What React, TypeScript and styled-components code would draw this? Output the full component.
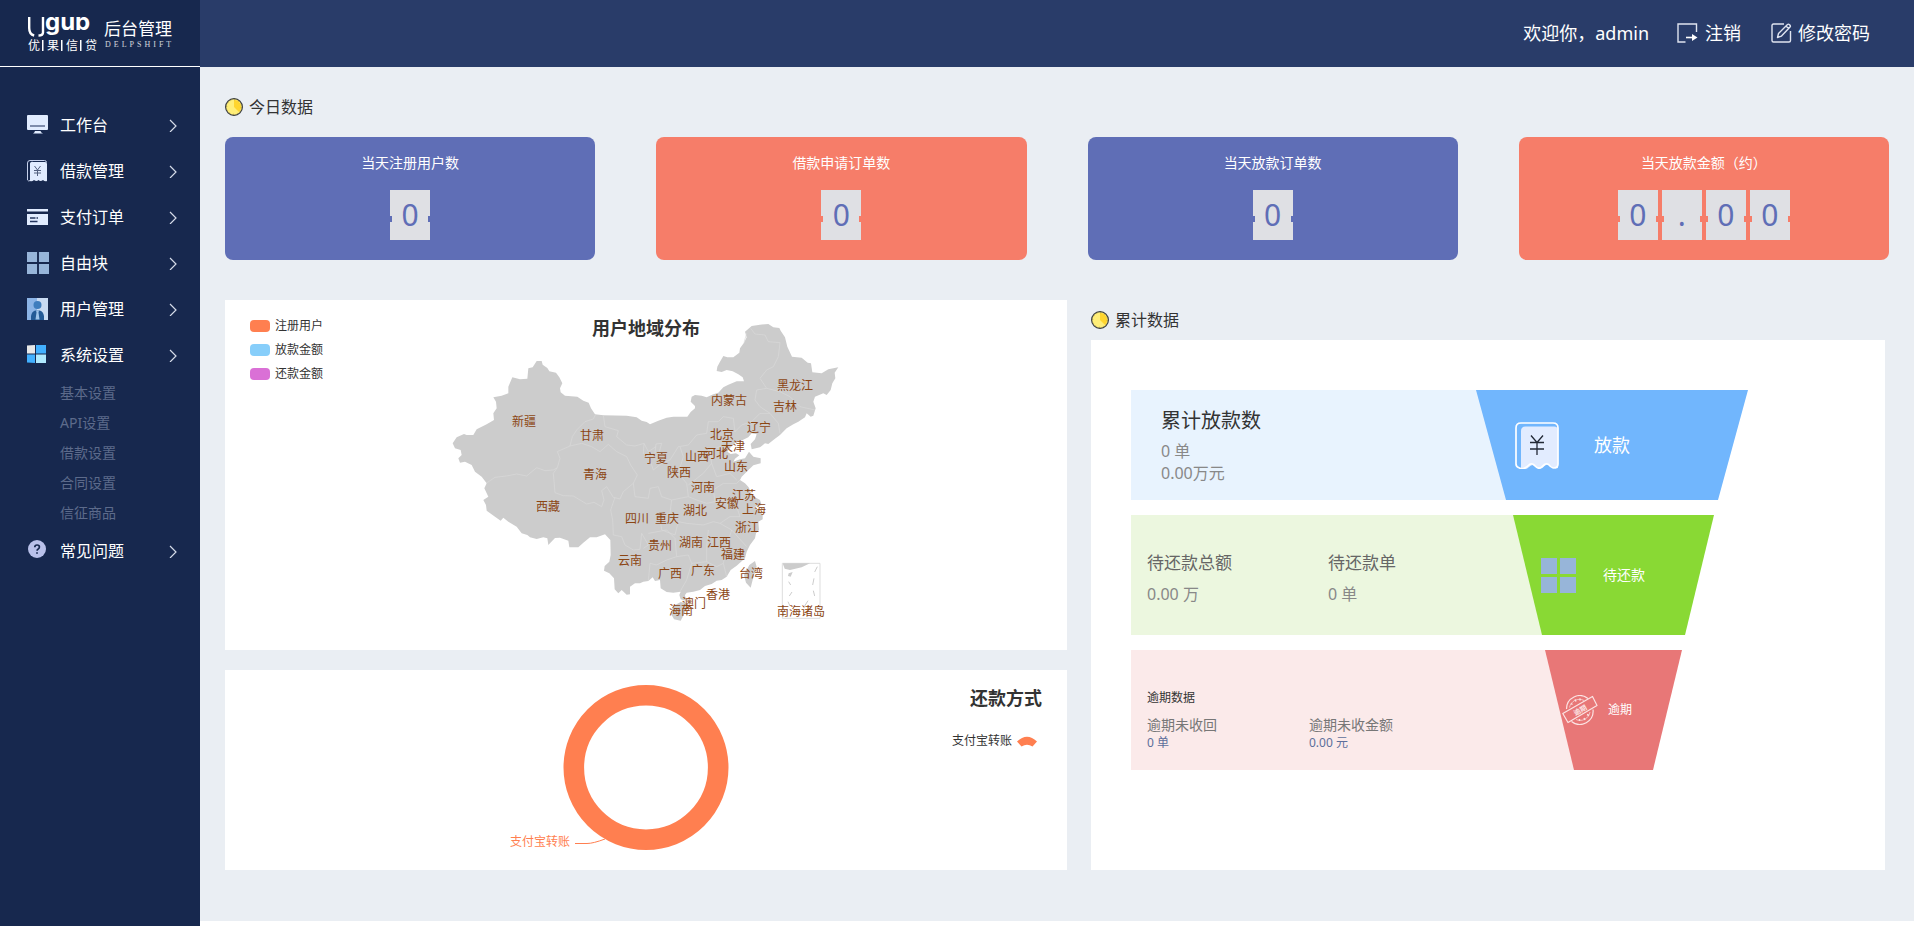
import React from "react";
import styled, { createGlobalStyle } from "styled-components";

const GlobalStyle = createGlobalStyle`
  *, *::before, *::after { box-sizing: border-box; }
  body {
    margin: 0;
    background: #fff;
    color: #333;
    font-family: "Noto Sans", "Noto Sans CJK SC", sans-serif;
    font-size: 14px;
    line-height: 20px;
  }
  h1, h2, h3, p, ul, dl, dd { margin: 0; padding: 0; font-weight: 400; }
  ul { list-style: none; }
  svg { display: block; flex: none; }
`;

/* ---------- shell ---------- */

const Shell = styled.div`
  display: flex;
  min-height: 100vh;
`;

const Sidebar = styled.aside`
  flex: 0 0 200px;
  background: #17284e;
`;

const Brand = styled.a`
  display: block;
  height: 67px;
  padding: 17px 0 0 28px;
  border-bottom: 1px solid #fff;
`;

const Nav = styled.nav`
  padding-top: 35px;
`;

const NavItem = styled.button`
  display: flex;
  align-items: center;
  width: 100%;
  height: 46px;
  padding: 0 23px 0 27px;
  border: 0;
  background: none;
  color: #fff;
  font: inherit;
  font-size: 16px;
  line-height: 24px;
  text-align: left;
  cursor: pointer;
`;

const NavIcon = styled.span`
  flex: 0 0 33px;
`;

const NavLabel = styled.span`
  flex: 1;
`;

const SubLink = styled.a`
  display: block;
  padding-left: 60px;
  color: #5d6b8b;
  font-size: 14px;
  line-height: 30px;
  text-decoration: none;
`;

const Column = styled.div`
  flex: 1;
  min-width: 0;
  display: flex;
  flex-direction: column;
`;

const TopBar = styled.header`
  display: flex;
  align-items: center;
  justify-content: flex-end;
  gap: 28px;
  height: 67px;
  padding: 0 44px 1px 0;
  background: #293c69;
  color: #fff;
  font-size: 18px;
  line-height: 24px;
`;

const TopLink = styled.a<{ $gap: number }>`
  display: flex;
  align-items: center;
  gap: ${(p) => p.$gap}px;
  color: inherit;
  text-decoration: none;
  & + & { margin-left: 2px; }
`;

const Main = styled.main`
  flex: 1;
  margin-bottom: 5px;
  padding: 25px;
  background: #eaeef3;
`;

/* ---------- today cards ---------- */

const SectionTitle = styled.h2<{ $height: number }>`
  display: flex;
  align-items: center;
  gap: 6px;
  height: ${(p) => p.$height}px;
  font-size: 16px;
`;

const StatGrid = styled.div`
  display: grid;
  grid-template-columns: repeat(4, 1fr);
  gap: 61px;
  margin: 15px 0 40px;
`;

const StatCard = styled.section<{ $color: string }>`
  display: flex;
  flex-direction: column;
  align-items: center;
  gap: 17px;
  padding: 16px 0 20px;
  border-radius: 8px;
  background: ${(p) => p.$color};
  color: #fff;
  --card: ${(p) => p.$color};
`;

const StatLabel = styled.h3`
  font-size: 14px;
  line-height: 20px;
`;

const Digits = styled.div`
  display: flex;
  gap: 4px;
`;

const Digit = styled.span`
  position: relative;
  width: 40px;
  height: 50px;
  background: #dfe0e4;
  color: #5f6eb6;
  font-size: 30px;
  line-height: 50px;
  text-align: center;

  &::before, &::after {
    content: "";
    position: absolute;
    top: 26px;
    width: 4px;
    height: 6px;
    background: var(--card);
  }
  &::before { left: -2px; }
  &::after { right: -2px; }
`;

/* ---------- lower panels ---------- */

const Panels = styled.div`
  display: grid;
  grid-template-columns: 842fr 794fr;
  gap: 24px;
  padding-right: 4px;
`;

const LeftStack = styled.div`
  display: grid;
  align-content: start;
  gap: 20px;
`;

const ChartPanel = styled.section`
  display: grid;
  grid-template-columns: 1fr auto 1fr;
  background: #fff;
`;

const ChartTitle = styled.h2`
  font-size: 18px;
  font-weight: 700;
  line-height: 24px;
`;

const MapTitle = styled(ChartTitle)`
  grid-area: 1 / 2;
  justify-self: center;
  padding-top: 16px;
`;

const MapSvg = styled.svg`
  grid-area: 1 / 2;
`;

const MapLabel = styled.text`
  fill: #8b4513;
  font-size: 12px;
  text-anchor: middle;
`;

const Legend = styled.ul`
  grid-area: 1 / 1;
  padding: 14px 0 0 25px;
`;

const LegendItem = styled.li`
  display: flex;
  align-items: center;
  gap: 5px;
  font-size: 12px;
  line-height: 24px;
`;

const Swatch = styled.span<{ $color: string }>`
  width: 20px;
  height: 12px;
  border-radius: 4px;
  background: ${(p) => p.$color};
`;

const DonutSvg = styled.svg`
  grid-area: 1 / 2;
`;

const DonutSide = styled.div`
  grid-area: 1 / 3;
  display: flex;
  flex-direction: column;
  align-items: flex-end;
  gap: 19px;
  padding: 16px 25px 0 0;
`;

const DonutKey = styled.p`
  display: flex;
  align-items: center;
  gap: 5px;
  padding-right: 5px;
  font-size: 12px;
  line-height: 24px;
`;

const DonutLabel = styled.text`
  fill: #ff7f50;
  font-size: 12px;
`;

const TotalColumn = styled.div`
  display: flex;
  flex-direction: column;
`;

const FunnelPanel = styled.section`
  flex: 1;
  display: flex;
  flex-direction: column;
  gap: 15px;
  padding: 50px 0 0 40px;
  background: #fff;
`;

const FunnelRow = styled.div<{ $height: number; $right: number }>`
  display: flex;
  height: ${(p) => p.$height}px;
  margin-right: ${(p) => p.$right}px;
`;

const FunnelInfo = styled.div<{ $color: string; $left: number; $top: number }>`
  flex: 1;
  padding: ${(p) => p.$top}px 0 0 ${(p) => p.$left}px;
  background: ${(p) => p.$color};
`;

const Segment = styled.div<{
  $width: number;
  $slant: number;
  $color: string;
  $left: number;
  $gap: number;
  $size: number;
}>`
  display: flex;
  align-items: center;
  flex: 0 0 ${(p) => p.$width}px;
  gap: ${(p) => p.$gap}px;
  margin-left: -${(p) => p.$slant}px;
  padding-left: ${(p) => p.$left}px;
  background: ${(p) => p.$color};
  clip-path: polygon(0 0, 100% 0, calc(100% - ${(p) => p.$slant}px) 100%, ${(p) => p.$slant}px 100%);
  color: #fff;
  font-size: ${(p) => p.$size}px;
`;

const LoanTitle = styled.h3`
  padding-bottom: 4px;
  font-size: 20px;
  line-height: 30px;
`;

const LoanValue = styled.p`
  color: #888;
  font-size: 16px;
  line-height: 22px;
`;

const Pairs = styled.dl<{ $first: number }>`
  display: grid;
  grid-template-columns: ${(p) => p.$first}px 1fr;
`;

const DueName = styled.dt`
  color: #666;
  font-size: 17px;
  line-height: 32px;
`;

const DueValue = styled.dd`
  color: #888;
  font-size: 16px;
  line-height: 30px;
`;

const LateTitle = styled.h3`
  padding-bottom: 6px;
  font-size: 12px;
  line-height: 24px;
`;

const LateName = styled.dt`
  color: #777;
  font-size: 14px;
  line-height: 18px;
`;

const LateValue = styled.dd`
  color: #5d6f9b;
  font-size: 12px;
  line-height: 18px;
`;

/* ---------- drawings ---------- */

const LogoLatin = styled.text`
  font-family: "Liberation Serif", serif;
  font-size: 8px;
  letter-spacing: 3px;
  opacity: 0.8;
`;

const Logo = () => (
  <svg width="150" height="36" viewBox="0 0 150 36" fill="#fff" role="img" aria-label="优果信贷 后台管理">
    <path d="M1.200 0v11q0 6.500 5 7.500M15 0v15.500q0 3-4.500 3" fill="none" stroke="#fff" strokeWidth="2.400" />
    <text x="17" y="13" fontFamily="Inter, sans-serif" fontSize="24" fontWeight="700">gub</text>
    <text x="0" y="33" fontSize="12">优</text>
    <text x="19" y="33" fontSize="12">果</text>
    <text x="38" y="33" fontSize="12">信</text>
    <text x="57" y="33" fontSize="12">贷</text>
    <path d="M14 23h1.500v11H14zM33 23h1.500v11H33zM52 23h1.500v11H52z" />
    <text x="76" y="18" fontSize="17">后台管理</text>
    <LogoLatin x="77" y="30">DELPSHIFT</LogoLatin>
  </svg>
);

const MonitorIcon = () => (
  <svg width="21" height="20" viewBox="0 0 21 20">
    <path d="M1 0h19a1 1 0 0 1 1 1v13a1 1 0 0 1-1 1H1a1 1 0 0 1-1-1V1a1 1 0 0 1 1-1z" fill="#e1ecff" />
    <path d="M3 11h15" stroke="#3b4c74" strokeWidth="1.200" />
    <path d="M8 16h5.500q.5 1.500 2.500 2.500H6q1.500-1 2-2.500z" fill="#e1ecff" />
  </svg>
);

const BillIcon = () => (
  <svg width="21" height="22" viewBox="0 0 21 22">
    <path d="M.5 20V3Q.5.5 3 .5h14.500q2 0 2 2M.5 20q.5 1.500 3 .5V4q0-2 2-2" fill="none" stroke="#c5d0ea" />
    <path d="M3 21V4q0-2 2-2h13q2 0 2 2v17q-2 1-4-1-2.500 2-4.500 0-2 2-4.500 0-2 2-4 1z" fill="#e1ecff" />
    <path d="m7.500 6 3 4 3-4M10.500 10v6M7 10.500h7M7 13h7" fill="none" stroke="#53607f" />
  </svg>
);

const CardIcon = () => (
  <svg width="21" height="16" viewBox="0 0 21 16">
    <path d="M0 0h21v2.500H0zM0 5h21v11H0z" fill="#e1ecff" />
    <path d="M3 9h5.500M9.500 9H11M3 12.500h7.500" stroke="#25365f" strokeWidth="1.300" />
  </svg>
);

const BlocksIcon = ({ size }: { size: number }) => (
  <svg width={size} height={size} viewBox="0 0 35 35">
    <path d="M0 0h16v16H0zM19 0h16v16H19zM0 19h16v16H0zM19 19h16v16H19z" fill="#97b5d9" />
  </svg>
);

const UserIcon = () => (
  <svg width="21" height="22" viewBox="0 0 21 22">
    <path d="M0 0h10v22H0z" fill="#8cb4e6" />
    <path d="M10 0h11v22H10z" fill="#c9dbf2" />
    <circle cx="10.500" cy="7" r="4" fill="#3f7dbd" />
    <path d="M4 22v-4q1-5 4.500-5.500h4Q16 13 17 18v4z" fill="#235a96" />
    <path d="M9 12.500h3l-.5 2 1 7h-4l1-7z" fill="#9ec4ea" />
  </svg>
);

const WindowsIcon = () => (
  <svg width="19" height="20" viewBox="0 0 19 20">
    <path d="M0 .5 8 0v8.500H0z" fill="#e8e8e8" />
    <path d="M9 0h10v8.500H9z" fill="#42b0ff" />
    <path d="M0 9.500h8V18l-8-.5z" fill="#42b0ff" />
    <path d="M9 9.500h10V18H9z" fill="#b0eaff" />
  </svg>
);

const HelpIcon = () => (
  <svg width="20" height="24" viewBox="0 0 20 24">
    <circle cx="10" cy="10" r="9" fill="#b9c1ea" />
    <path d="M7.800 8.200q0-2.200 2.300-2.200t2.300 2q0 1.200-1.200 1.900-1.100.6-1.100 1.900M10 13.200v1.600" fill="none" stroke="#17284e" strokeWidth="1.700" />
  </svg>
);

const Chevron = () => (
  <svg width="8" height="14" viewBox="0 0 8 14" fill="none" stroke="#d5dbe8" strokeWidth="1.200">
    <path d="m1 2 6 6-6 6" />
  </svg>
);

const LogoutIcon = () => (
  <svg width="21" height="20" viewBox="0 0 21 20" fill="none" stroke="#dfe4f0" strokeWidth="1.400">
    <path d="M19.500 9V1H1v18h7.500" />
    <path d="M9 14.500h7" stroke="#fff" strokeWidth="1.600" />
    <path d="m15 11 5.500 3.500L15 18z" fill="#fff" stroke="none" />
  </svg>
);

const EditIcon = () => (
  <svg width="21" height="20" viewBox="0 0 21 20" fill="none" stroke="#dfe4f0" strokeWidth="1.400" strokeLinejoin="round">
    <path d="M13 1H2.500Q1 1 1 2.500v15Q1 19 2.500 19h15.500q1.500 0 1.500-1.500V8" />
    <path d="m6.500 14.500 1-4 9-9q1-.8 2 .2l.5.6q.8 1 0 1.800l-8.500 9zM15 3l2.500 2.500" />
  </svg>
);

const ClockIcon = () => (
  <svg width="18" height="18" viewBox="0 0 18 18">
    <circle cx="9" cy="9" r="8.400" fill="#ffee78" stroke="#3a3d42" strokeWidth="1.200" />
    <path d="M9 9V2a7 7 0 0 1 5 12z" fill="#ffd52e" />
    <circle cx="9" cy="9" r="7.300" fill="none" stroke="#8a7c30" strokeWidth=".8" strokeDasharray=".8 3.020" />
  </svg>
);

const ReceiptIcon = () => (
  <svg width="44" height="47" viewBox="0 0 44 47">
    <path d="M6 46V9q0-4.500 4.500-4.500H39q4 0 4 4V46q-4 1.500-7.500-2-3-2.500-6 0-4 5-7.500 1-4-4-8 0-4 4-8 1z" fill="#e2ecff" />
    <path d="M1 42V6q0-5 5-5h32q5 0 5 5v36q0 4-4.500 4-1.500 0-5-3.500-2-1.500-4 0l-3 2.700q-2.500 2-5 0l-3-2.700q-2-1.500-4 0-6 6-10 3.500Q1 45 1 42z" fill="none" stroke="#fff" strokeWidth="1.700" />
    <path d="m16 13.500 6 7 6-7M22 20.500V33M15 20.500h14M15 27h14" fill="none" stroke="#222936" strokeWidth="1.300" />
  </svg>
);

const StampIcon = () => (
  <svg width="36" height="30" viewBox="0 0 36 30" fill="none" stroke="#fbe3e3" strokeWidth="1.200">
    <path d="M4.500 14A13.300 13.300 0 0 1 26 3.500M31 14.500A13.300 13.300 0 0 1 9.500 26.500" />
    <path d="M7.500 12.500A10 10 0 0 1 22 5.500M28 17A10 10 0 0 1 14 24.500" strokeWidth=".7" />
    <path d="M9 8.500l1.500 1M13 4.500l1 2M18 3.500v2M27 20.500l-2-1M23 25l-1-2M17.500 26v-2" strokeWidth="1.500" />
    <path d="M.8 18.500 30.500 1.500l4.500 9L6 27.500z" strokeLinejoin="round" />
    <text x="18" y="18" fill="#fbe3e3" stroke="none" fontSize="7" fontWeight="700" textAnchor="middle" transform="rotate(-30 18 15)">逾期</text>
  </svg>
);

/* ---------- data ---------- */

const menu = [
  { label: "工作台", icon: <MonitorIcon /> },
  { label: "借款管理", icon: <BillIcon /> },
  { label: "支付订单", icon: <CardIcon /> },
  { label: "自由块", icon: <BlocksIcon size={22} /> },
  { label: "用户管理", icon: <UserIcon /> },
  {
    label: "系统设置",
    icon: <WindowsIcon />,
    children: ["基本设置", "API设置", "借款设置", "合同设置", "信征商品"],
  },
  { label: "常见问题", icon: <HelpIcon /> },
];

const BLUE = "#5f6eb6";
const CORAL = "#f67d69";

const stats = [
  { label: "当天注册用户数", value: "0", color: BLUE },
  { label: "借款申请订单数", value: "0", color: CORAL },
  { label: "当天放款订单数", value: "0", color: BLUE },
  { label: "当天放款金额（约）", value: "0.00", color: CORAL },
];

const legend = [
  { label: "注册用户", color: "#ff7f50" },
  { label: "放款金额", color: "#87cefa" },
  { label: "还款金额", color: "#da70d6" },
];

const provinces: [string, number, number][] = [
  ["新疆", 88, 126], ["甘肃", 156, 140], ["青海", 159, 179], ["西藏", 112, 211],
  ["黑龙江", 359, 90], ["吉林", 349, 111], ["内蒙古", 293, 105], ["辽宁", 323, 132],
  ["北京", 286, 139], ["天津", 297, 151], ["河北", 280, 158], ["山西", 261, 161],
  ["宁夏", 220, 163], ["陕西", 243, 177], ["山东", 300, 171], ["河南", 267, 192],
  ["江苏", 308, 200], ["安徽", 291, 208], ["上海", 318, 214], ["湖北", 259, 215],
  ["四川", 201, 223], ["重庆", 231, 223], ["浙江", 311, 232], ["贵州", 224, 250],
  ["湖南", 255, 247], ["江西", 283, 247], ["福建", 297, 259], ["云南", 194, 265],
  ["广西", 234, 278], ["广东", 267, 275], ["台湾", 315, 278], ["香港", 282, 299],
  ["澳门", 258, 308], ["海南", 245, 315], ["南海诸岛", 365, 316],
];

const MAINLAND =
  "M290 183 305 183 308 194 322 204 328 214 348 218 358 232 367 250 360 265 362 277 375 287 412 290 430 302 446 308 453 325 465 343 490 346 560 347 590 352 605 362 620 366 630 373 655 362 680 353 700 350 742 350 752 336 765 325 765 318 752 305 755 290 765 285 785 287 800 292 820 283 835 278 850 262 865 254 890 244 912 244 908 232 895 223 878 214 860 210 845 216 830 213 832 200 840 185 850 168 862 172 880 172 898 158 900 145 912 128 920 112 915 95 935 78 960 74 985 72 1000 82 1018 84 1022 92 1035 112 1042 140 1056 170 1085 173 1103 188 1113 190 1117 217 1145 220 1165 208 1195 202 1184 218 1186 235 1177 250 1172 270 1160 285 1150 280 1125 290 1120 305 1127 325 1120 347 1112 350 1100 340 1095 352 1075 365 1060 373 1040 385 1020 405 1000 420 985 432 975 430 960 442 935 448 932 432 945 418 950 403 935 400 925 412 908 420 890 425 872 442 862 455 872 462 888 460 898 466 885 476 880 485 900 478 915 475 927 455 940 470 962 475 962 490 940 496 920 515 905 530 900 540 915 550 926 562 935 582 945 592 960 600 965 615 940 622 958 630 968 645 968 658 955 665 957 690 948 700 945 715 930 735 920 755 915 775 890 797 872 810 860 830 845 840 830 842 815 852 795 858 780 870 760 875 740 878 735 885 738 902 722 898 718 885 722 875 700 878 680 876 662 865 660 840 645 843 638 832 625 843 610 845 600 850 585 850 570 860 570 883 560 884 545 870 535 880 524 868 522 835 508 820 492 812 494 798 508 785 512 765 511 720 495 703 470 712 450 712 430 728 415 742 388 742 385 722 360 713 345 714 325 735 322 715 310 712 290 717 270 712 262 705 245 700 230 680 205 665 190 653 182 662 165 650 140 632 138 615 130 600 145 590 133 565 140 550 125 530 105 515 95 495 75 485 60 488 55 475 65 465 62 450 45 445 38 430 50 412 72 402 80 405 100 405 110 388 140 373 162 360 160 340 170 325 168 305 160 292 185 287 205 280 205 260 217 232 240 238 262 236 265 205 278 202Z";

const BORDERS =
  "M138 550 165 532 200 528 230 522 260 528 290 503 315 512 340 510 352 503 360 475 352 455 390 438 397 410 410 390 435 365 460 357 467 343M352 503 340 520 345 578 370 587 400 588 440 612 462 607 485 620 492 600 485 572 500 560 520 592 540 597 550 575 580 550 592 525 572 495 560 470 530 455 505 433 480 455 455 440 425 430 390 438M490 346 495 380 535 392 530 410 560 435 585 438 612 430 610 460 630 480 640 510 665 490 655 465 665 430 648 432 645 460M525 592 512 630 518 660 520 705 545 710 555 735 580 750 600 748 605 700 625 735 610 745M612 430 625 455 648 440M665 490 690 480 715 440 745 435 770 405 800 400 805 365 835 365 850 350 880 355 885 395 905 375 935 365 960 340 990 340 1015 370 1020 400M720 440 730 470 715 520 740 550 745 590 695 600 665 590 655 560 630 565 625 595 585 590 580 550M745 555 790 520 815 490 810 450 840 440 860 455M745 590 770 600 800 610 825 605 820 570 850 550 890 550 900 540M815 490 830 530 870 520 890 540M695 600 690 640 660 650 665 690 705 705 715 665 740 670 790 675 820 665 840 670 870 650 900 650 890 620 850 600 825 605M625 700 680 690 705 715 710 770 745 765 755 790 800 785 800 740 805 690M840 670 875 690 860 740 850 790 830 800 800 785M875 690 920 740M710 770 680 780 650 795 630 790 625 843M755 790 740 840 720 875M850 790 860 830M932 85 945 102 975 105 985 125 1020 128 1015 170 1000 200 980 210 960 235 980 265 950 270 945 300 960 320 990 340M980 265 1020 275 1050 290 1080 320 1125 330M912 128 920 100";

/* ---------- sections ---------- */

const ChinaMap = () => (
  <MapSvg width="420" height="350" viewBox="0 0 420 350" role="img" aria-label="用户地域分布">
    <g transform="translate(4 0) scale(0.333333)" fill="#ccc">
      <path d={MAINLAND} />
      <path d="M700 918 722 906 742 910 740 928 722 962 702 958 692 940Z" />
      <path d="M928 795 945 783 950 800 940 832 932 863 918 848 912 825Z" />
      <path d={BORDERS} fill="none" stroke="#d9d9d9" strokeWidth="2" />
      <path d="M1027 790H1140V955H1027Z" fill="none" stroke="#ddd" strokeWidth="3" />
      <path d="M1028 790H1110L1085 802 1050 810 1034 806ZM1046 820 1058 816 1052 830 1044 828Z" />
      <path d="M1132 800 1124 816M1122 835 1118 855M1120 872 1124 888M1104 902 1094 918M1046 845 1052 855M1056 876 1048 888M1044 905 1050 918" stroke="#ccc" strokeWidth="3" />
    </g>
    {provinces.map(([name, x, y]) => (
      <MapLabel key={name} x={x} y={y}>{name}</MapLabel>
    ))}
  </MapSvg>
);

const Donut = () => (
  <DonutSvg width="300" height="200" viewBox="0 0 300 200" role="img" aria-label="还款方式">
    <circle cx="150" cy="97.500" r="72.200" fill="none" stroke="#ff7f50" strokeWidth="20.600" />
    <path d="M79 173.500h12q6 0 18-4.500" fill="none" stroke="#ff7f50" />
    <DonutLabel x="14" y="176">支付宝转账</DonutLabel>
  </DonutSvg>
);

export default function App() {
  return (
    <>
      <GlobalStyle />
      <Shell>
        <Sidebar>
          <Brand href="#"><Logo /></Brand>
          <Nav>
            {menu.map((item) => (
              <React.Fragment key={item.label}>
                <NavItem type="button">
                  <NavIcon>{item.icon}</NavIcon>
                  <NavLabel>{item.label}</NavLabel>
                  <Chevron />
                </NavItem>
                {item.children?.map((child) => (
                  <SubLink href="#" key={child}>{child}</SubLink>
                ))}
              </React.Fragment>
            ))}
          </Nav>
        </Sidebar>

        <Column>
          <TopBar>
            <span>欢迎你，admin</span>
            <TopLink href="#" $gap={7}><LogoutIcon />注销</TopLink>
            <TopLink href="#" $gap={6}><EditIcon />修改密码</TopLink>
          </TopBar>

          <Main>
            <SectionTitle $height={30}><ClockIcon />今日数据</SectionTitle>
            <StatGrid>
              {stats.map((s) => (
                <StatCard key={s.label} $color={s.color}>
                  <StatLabel>{s.label}</StatLabel>
                  <Digits>
                    {s.value.split("").map((d, i) => <Digit key={i}>{d}</Digit>)}
                  </Digits>
                </StatCard>
              ))}
            </StatGrid>

            <Panels>
              <LeftStack>
                <ChartPanel>
                  <Legend>
                    {legend.map((l) => (
                      <LegendItem key={l.label}><Swatch $color={l.color} />{l.label}</LegendItem>
                    ))}
                  </Legend>
                  <ChinaMap />
                  <MapTitle>用户地域分布</MapTitle>
                </ChartPanel>
                <ChartPanel>
                  <Donut />
                  <DonutSide>
                    <ChartTitle>还款方式</ChartTitle>
                    <DonutKey>
                      支付宝转账
                      <svg width="20" height="12" viewBox="0 0 20 12">
                        <path d="M0 6.500Q10-3 20 6.500L15.500 11.500Q10 8 4.500 11.500Z" fill="#ff7f50" />
                      </svg>
                    </DonutKey>
                  </DonutSide>
                </ChartPanel>
              </LeftStack>

              <TotalColumn>
                <SectionTitle $height={40}><ClockIcon />累计数据</SectionTitle>
                <FunnelPanel>
                  <FunnelRow $height={110} $right={137}>
                    <FunnelInfo $color="#e8f3fe" $left={30} $top={16}>
                      <LoanTitle>累计放款数</LoanTitle>
                      <LoanValue>0 单</LoanValue>
                      <LoanValue>0.00万元</LoanValue>
                    </FunnelInfo>
                    <Segment $width={272} $slant={30} $color="#71b6fd" $left={39} $gap={35} $size={18}>
                      <ReceiptIcon />放款
                    </Segment>
                  </FunnelRow>
                  <FunnelRow $height={120} $right={171}>
                    <FunnelInfo $color="#ecf7df" $left={16} $top={32}>
                      <Pairs $first={181}>
                        <DueName>待还款总额</DueName>
                        <DueName>待还款单</DueName>
                        <DueValue>0.00 万</DueValue>
                        <DueValue>0 单</DueValue>
                      </Pairs>
                    </FunnelInfo>
                    <Segment $width={201} $slant={29} $color="#89d934" $left={28} $gap={27} $size={14}>
                      <BlocksIcon size={35} />待还款
                    </Segment>
                  </FunnelRow>
                  <FunnelRow $height={120} $right={203}>
                    <FunnelInfo $color="#fbeaea" $left={16} $top={36}>
                      <LateTitle>逾期数据</LateTitle>
                      <Pairs $first={162}>
                        <LateName>逾期未收回</LateName>
                        <LateName>逾期未收金额</LateName>
                        <LateValue>0 单</LateValue>
                        <LateValue>0.00 元</LateValue>
                      </Pairs>
                    </FunnelInfo>
                    <Segment $width={137} $slant={29} $color="#e87777" $left={17} $gap={10} $size={12}>
                      <StampIcon />逾期
                    </Segment>
                  </FunnelRow>
                </FunnelPanel>
              </TotalColumn>
            </Panels>
          </Main>
        </Column>
      </Shell>
    </>
  );
}
